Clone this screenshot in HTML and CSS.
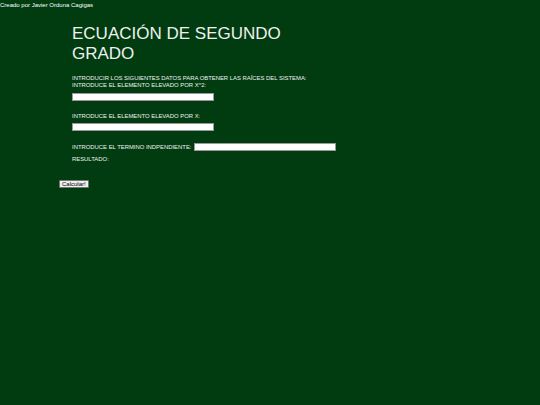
FILE: index.html
```html
<!DOCTYPE html>
<html lang="es">
<head>
<meta charset="utf-8">
<title>Ecuación de segundo grado</title>
<link rel="stylesheet" href="styles.css">
</head>
<body>
<div class="credit">Creado por Javier Orduna Cagigas</div>
<main class="page">
  <form class="form">
    <div class="content">
      <h1 class="title">ECUACIÓN DE SEGUNDO GRADO</h1>
      <p class="intro">INTRODUCIR LOS SIGUIENTES DATOS PARA OBTENER LAS RAÍCES DEL SISTEMA:<br>INTRODUCE EL ELEMENTO ELEVADO POR X^2:</p>
      <input class="field first" type="text">
      <p class="label">INTRODUCE EL ELEMENTO ELEVADO POR X:</p>
      <input class="field" type="text">
      <p class="label inline">INTRODUCE EL TERMINO INDPENDIENTE:<input class="field" type="text"></p>
      <p class="label result">RESULTADO:</p>
    </div>
    <button class="btn" type="button">Calcular!</button>
  </form>
</main>
</body>
</html>
```
FILE: styles.css
```css
html, body {
  margin: 0;
  padding: 0;
  background: #003c0f;
  color: #f0f0f0;
  font-family: "Liberation Sans", Arial, sans-serif;
}
.credit {
  font-size: 6px;
  line-height: 10px;
  color: #ffffff;
}
.page {
  padding-left: 59px;
}
.content {
  padding-left: 13px;
  width: 270px;
}
.title {
  margin: 14px 0 0 0;
  font-size: 17px;
  line-height: 20px;
  font-weight: normal;
  width: 230px;
}
.intro, .label {
  font-size: 5.9px;
  line-height: 7px;
  margin: 0;
}
.intro {
  margin-top: 11px;
}
.field {
  display: block;
  box-sizing: border-box;
  width: 142px;
  height: 8px;
  margin: 3px 0 0 0;
  padding: 0;
  border: 1px solid #9a9a9a;
  background: #ffffff;
}
.field.first {
  margin-top: 4px;
}
.label {
  margin-top: 12px;
}
.inline {
  margin-top: 12px;
  display: flex;
  align-items: center;
  gap: 3px;
}
.inline .field {
  margin: 0;
}
.result {
  margin-top: 5px;
}
.btn {
  display: block;
  margin-top: 17px;
  font-family: "Liberation Sans", Arial, sans-serif;
  font-size: 6px;
  height: 8px;
  padding: 0 2px;
  line-height: 6px;
  border: 1px solid #767676;
  background: #efefef;
  color: #000;
  border-radius: 1px;
}
```
